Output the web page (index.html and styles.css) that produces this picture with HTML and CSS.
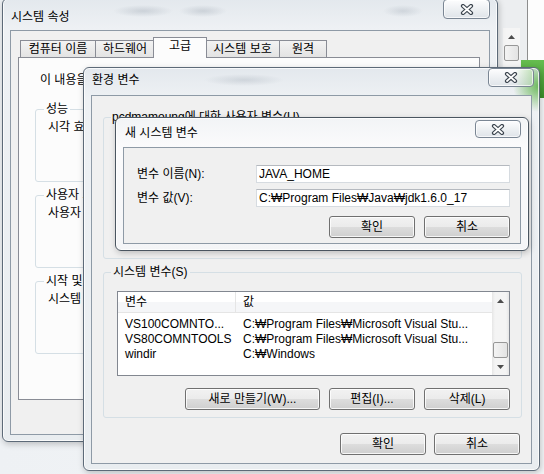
FILE: index.html
```html
<!DOCTYPE html>
<html lang="ko">
<head>
  <meta charset="UTF-8">
  <meta name="viewport" content="width=device-width, initial-scale=1.0">
  <title>환경 변수</title>
  <link rel="stylesheet" href="styles.css">
</head>
<body>

  <svg class="defs" width="0" height="0">
    <symbol id="x-glyph" viewBox="0 0 14 11">
      <path d="M3 2 L11 9 M11 2 L3 9" stroke="#3d4650" stroke-width="4.2" stroke-linecap="round" fill="none"/>
      <path d="M3 2 L11 9 M11 2 L3 9" stroke="#ffffff" stroke-width="1.8" stroke-linecap="round" fill="none"/>
    </symbol>
    <symbol id="arrow-up" viewBox="0 0 7 4">
      <path d="M0 4 L3.5 0 L7 4 Z" fill="#4d4d4d"/>
    </symbol>
    <symbol id="arrow-down" viewBox="0 0 7 4">
      <path d="M0 0 L3.5 4 L7 0 Z" fill="#4d4d4d"/>
    </symbol>
  </svg>

  <!-- Whatever sits behind the dialogs -->
  <div class="help-orb"></div>
  <div class="back-pane">
    <div class="back-scroll">
      <span class="scroll-btn"><svg width="7" height="4"><use href="#arrow-up"/></svg></span>
      <span class="scroll-thumb back-thumb"></span>
    </div>
  </div>
  <div class="green-glow"></div>

  <!-- 시스템 속성 -->
  <div class="window win-sys">
    <div class="titlebar">
      <span class="title">시스템 속성</span>
      <button type="button" class="close"><svg width="14" height="11"><use href="#x-glyph"/></svg></button>
    </div>
    <div class="client">
      <div class="tabs">
        <span class="tab tab-name">컴퓨터 이름</span>
        <span class="tab tab-hw">하드웨어</span>
        <span class="tab tab-adv active">고급</span>
        <span class="tab tab-prot">시스템 보호</span>
        <span class="tab tab-remote">원격</span>
      </div>
      <div class="tab-panel">
        <p class="note">이 내용을</p>
        <fieldset class="group">
          <legend>성능</legend>
          <p>시각 효과</p>
        </fieldset>
        <fieldset class="group">
          <legend>사용자 프로필</legend>
          <p>사용자 로그온</p>
        </fieldset>
        <fieldset class="group">
          <legend>시작 및 복구</legend>
          <p>시스템 시작</p>
        </fieldset>
      </div>
    </div>
  </div>

  <!-- 환경 변수 -->
  <div class="window win-env">
    <div class="titlebar">
      <span class="title">환경 변수</span>
      <button type="button" class="close"><svg width="14" height="11"><use href="#x-glyph"/></svg></button>
    </div>
    <div class="client">
      <fieldset class="group user-group">
        <legend>pcdmamoung에 대한 사용자 변수(U)</legend>
      </fieldset>

      <fieldset class="group sys-group">
        <legend>시스템 변수(S)</legend>
        <div class="list">
          <div class="list-body">
            <div class="list-head">
              <span>변수</span>
              <span>값</span>
            </div>
            <div class="rows">
              <div class="row"><span>VS100COMNTO...</span><span>C:₩Program Files₩Microsoft Visual Stu...</span></div>
              <div class="row"><span>VS80COMNTOOLS</span><span>C:₩Program Files₩Microsoft Visual Stu...</span></div>
              <div class="row"><span>windir</span><span>C:₩Windows</span></div>
            </div>
          </div>
          <div class="scrollbar">
            <span class="scroll-btn"><svg width="7" height="4"><use href="#arrow-up"/></svg></span>
            <span class="scroll-track"><span class="scroll-thumb"></span></span>
            <span class="scroll-btn"><svg width="7" height="4"><use href="#arrow-down"/></svg></span>
          </div>
        </div>
        <div class="btn-row list-actions">
          <button type="button" class="btn btn-wide">새로 만들기(W)...</button>
          <button type="button" class="btn">편집(I)...</button>
          <button type="button" class="btn">삭제(L)</button>
        </div>
      </fieldset>

      <div class="btn-row dialog-actions">
        <button type="button" class="btn">확인</button>
        <button type="button" class="btn">취소</button>
      </div>
    </div>
  </div>

  <!-- 새 시스템 변수 -->
  <div class="window win-new">
    <div class="titlebar">
      <span class="title">새 시스템 변수</span>
      <button type="button" class="close"><svg width="14" height="11"><use href="#x-glyph"/></svg></button>
    </div>
    <div class="client">
      <div class="field-grid">
        <label for="var-name">변수 이름(N):</label>
        <input type="text" id="var-name" value="JAVA_HOME">
        <label for="var-value">변수 값(V):</label>
        <input type="text" id="var-value" value="C:₩Program Files₩Java₩jdk1.6.0_17">
      </div>
      <div class="btn-row">
        <button type="button" class="btn">확인</button>
        <button type="button" class="btn">취소</button>
      </div>
    </div>
  </div>

</body>
</html>
```

FILE: styles.css
```css
/* Reset */
* {
  margin: 0;
  padding: 0;
  box-sizing: border-box;
}

body {
  position: relative;
  width: 544px;
  height: 474px;
  overflow: hidden;
  font-family: "Liberation Sans", "Noto Sans CJK KR", sans-serif;
  font-size: 12px;
  line-height: 15px;
  color: #000;
  background: linear-gradient(90deg, #eef1f4 0, #f4f6f8 100%);
}

.defs {
  position: absolute;
}

/* Desktop leftovers behind the dialogs */
.help-orb {
  position: absolute;
  left: 489px;
  top: 3px;
  width: 16px;
  height: 16px;
  border-radius: 50%;
  background: radial-gradient(circle at 45% 35%, #9ec0f2, #2a5cbc 70%);
}

.back-pane {
  position: absolute;
  left: 498px;
  top: 0;
  width: 30px;
  height: 70px;
  padding: 28px 0 0 5px;
  background: #eceef0;
  border-right: 1px solid #8d8d8d;
  box-shadow: 16px 0 0 #fdfdfd;
}

.back-scroll {
  display: flex;
  flex-direction: column;
  width: 17px;
  height: 42px;
  background: #f5f5f5;
}

.back-thumb {
  margin-top: 1px;
  height: 22px;
}

.green-glow {
  position: absolute;
  left: 521px;
  top: 60px;
  width: 26px;
  height: 38px;
  background: linear-gradient(#66bd50, #3a8e29);
}

/* Window frame */
.window {
  position: absolute;
  display: flex;
  flex-direction: column;
  padding: 0 7px 6px;
  border: 1px solid #5d6a78;
  border-radius: 6px;
  background: linear-gradient(180deg, #e3e8ed 0, #eef1f4 30px, #e9edf0 100%);
  box-shadow: inset 0 0 0 1px rgba(255, 255, 255, 0.75), 1px 2px 6px rgba(0, 0, 0, 0.22);
}

.win-sys {
  left: 2px;
  top: -2px;
  width: 496px;
  height: 444px;
  background:
    radial-gradient(30px 6px at 140px 12px, rgba(150, 160, 172, 0.35), transparent),
    radial-gradient(24px 6px at 200px 12px, rgba(150, 160, 172, 0.35), transparent),
    radial-gradient(20px 6px at 400px 12px, rgba(150, 160, 172, 0.3), transparent),
    linear-gradient(180deg, #e3e8ed 0, #eef1f4 30px, #e9edf0 100%);
}

.win-env {
  left: 83px;
  top: 67px;
  width: 457px;
  height: 404px;
  background:
    radial-gradient(26px 26px at 100% 18px, rgba(86, 176, 66, 0.85), rgba(86, 176, 66, 0) 100%),
    radial-gradient(40px 6px at 160px 12px, rgba(150, 160, 172, 0.3), transparent),
    linear-gradient(180deg, #e3e8ed 0, #eef1f4 30px, #e9edf0 100%);
}

.win-new {
  left: 115px;
  top: 117px;
  width: 414px;
  height: 134px;
  border-color: #4a5560;
  background: linear-gradient(180deg, #f2f4f6 0, #fbfbfc 30px, #f4f5f7 100%);
}

.titlebar {
  display: flex;
  flex-shrink: 0;
  align-items: flex-start;
  justify-content: space-between;
}

.title {
  padding-left: 1px;
}

.win-sys .titlebar { height: 31px; }
.win-sys .title { margin-top: 11px; }

.win-env .titlebar { height: 27px; }
.win-env .title { margin-top: 5px; }

.win-new .titlebar { height: 29px; }
.win-new .title { margin-top: 8px; padding-left: 2px; }

/* Close button */
.close {
  display: flex;
  align-items: center;
  justify-content: center;
  width: 47px;
  height: 20px;
  border: 1px solid #7a8694;
  border-radius: 4px;
  background: linear-gradient(#fdfdfe, #eceff2 55%, #dfe4e9);
  box-shadow: inset 0 0 0 1px rgba(255, 255, 255, 0.7);
}

.win-env .close {
  width: 46px;
  height: 19px;
  margin-right: -2px;
  background: linear-gradient(90deg, rgba(255, 255, 255, 0) 60%, rgba(120, 190, 100, 0.45)), linear-gradient(#fdfdfe, #eceff2 55%, #dfe4e9);
}

.win-new .close { width: 46px; height: 18px; margin-top: 2px; }

/* Client area */
.client {
  flex: 1;
  background: #f0f0f0;
  border: 1px solid #8e9aa6;
}

.win-sys .client {
  padding: 9px 9px 0 7px;
}

.win-env .client {
  padding: 14px 9px 0 11px;
}

.win-new .client {
  padding: 17px 10px 0 13px;
}

/* Tabs */
.tabs {
  display: flex;
  align-items: flex-start;
  height: 17px;
  padding-left: 2px;
}

.tab {
  height: 17px;
  padding-top: 1px;
  margin-left: -1px;
  text-align: center;
  white-space: nowrap;
  border: 1px solid #898c95;
  border-bottom: none;
  background: linear-gradient(#f3f3f3, #e3e3e3);
}

.tab-name { width: 76px; margin-left: 0; }
.tab-hw { width: 60px; }
.tab-adv { width: 54px; }
.tab-prot { width: 75px; }
.tab-remote { width: 48px; }

.tab.active {
  position: relative;
  z-index: 2;
  height: 21px;
  margin-top: -3px;
  margin-left: -2px;
  margin-right: -1px;
  background: #fcfcfc;
}

.tab-panel {
  height: 343px;
  padding: 15px 16px 0;
  background: #fcfcfc;
  border: 1px solid #898c95;
}

.note {
  margin-left: 5px;
}

/* Group boxes */
.group {
  min-width: 0;
  padding: 0 10px 0 8px;
  border: 1px solid #d5dfe5;
  border-radius: 3px;
}

.group legend {
  padding: 0 2px;
}

.win-sys .group {
  height: 80px;
  margin-top: 6px;
}

.win-sys .group:first-of-type {
  margin-top: 14px;
}

.win-sys .group p {
  margin: 3px 0 0 4px;
  white-space: nowrap;
}

.user-group {
  height: 149px;
  padding-left: 7px;
}

.user-group legend {
  padding: 0 1px;
}

.sys-group {
  margin-top: 6px;
  padding: 0 11px 7px 7px;
}

/* System variable list */
.list {
  display: flex;
  height: 85px;
  margin: 11px 0 0 6px;
  background: #fff;
  border: 1px solid #828790;
}

.list-body {
  flex: 1;
  overflow: hidden;
}

.list-head {
  display: grid;
  grid-template-columns: 117px 1fr;
  height: 21px;
  border-bottom: 1px solid #e5e5e5;
  background: linear-gradient(#fff 50%, #f5f6f8 50%);
}

.list-head span {
  padding-left: 7px;
  line-height: 20px;
}

.list-head span + span {
  border-left: 1px solid #e5e5e5;
}

.rows {
  padding-top: 4px;
}

.row {
  display: grid;
  grid-template-columns: 118px 1fr;
  height: 15px;
  white-space: nowrap;
}

.row span {
  padding-left: 7px;
  overflow: hidden;
}

/* Scrollbars */
.scrollbar {
  display: flex;
  flex-direction: column;
  width: 17px;
  background: linear-gradient(90deg, #e6e6e6, #f4f4f4 3px, #f4f4f4 14px, #e6e6e6);
}

.scroll-btn {
  display: flex;
  align-items: center;
  justify-content: center;
  height: 17px;
  flex-shrink: 0;
}

.scroll-track {
  flex: 1;
  padding-top: 33px;
}

.scroll-thumb {
  display: block;
  height: 16px;
  margin: 0 1px;
  border: 1px solid #979797;
  border-radius: 2px;
  background: linear-gradient(90deg, #f4f4f4, #e3e3e3);
}

/* Buttons */
.btn-row {
  display: flex;
  justify-content: flex-end;
  gap: 9px;
  margin-top: 9px;
}

.list-actions {
  margin-top: 12px;
}

.dialog-actions {
  gap: 8px;
  margin: 15px 2px 0 0;
}

.btn {
  width: 86px;
  height: 22px;
  font: inherit;
  color: #000;
  border: 1px solid #707070;
  border-radius: 3px;
  background: linear-gradient(#f2f2f2 0, #ebebeb 50%, #dddddd 50%, #cfcfcf 100%);
  box-shadow: inset 0 0 0 1px rgba(255, 255, 255, 0.8);
}

.btn-wide {
  width: 135px;
}

/* New variable form */
.field-grid {
  display: grid;
  grid-template-columns: 119px 1fr;
  row-gap: 6px;
  align-items: center;
}

.field-grid input {
  height: 18px;
  padding: 0 2px;
  font: inherit;
  color: #000;
  background: #fff;
  border: 1px solid #d6dbe0;
  border-top-color: #b5b9bf;
  outline: none;
}
```
